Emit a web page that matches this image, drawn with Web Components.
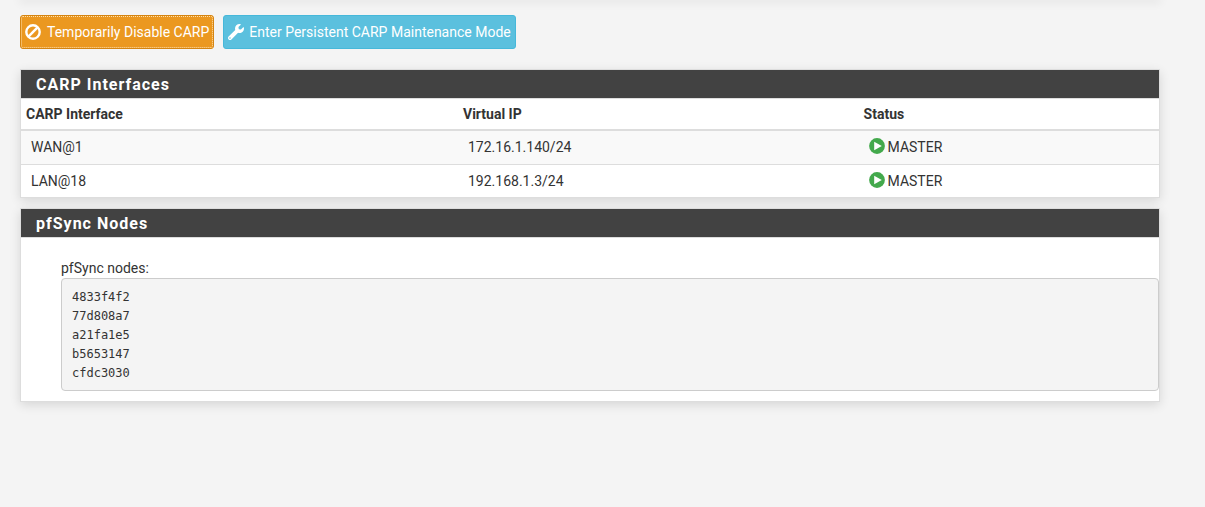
<!DOCTYPE html>
<html lang="en">
<head>
<meta charset="utf-8">
<title>Status: CARP</title>
<style>
body{margin:0;background:#f4f4f4;color:#333;font:14px/20px Roboto,"Liberation Sans",sans-serif}
</style>
</head>
<body>
<carp-page>
  <action-button slot="actions" kind="warning" icon="ban">Temporarily Disable CARP</action-button>
  <action-button slot="actions" kind="info" icon="wrench">Enter Persistent CARP Maintenance Mode</action-button>
  <status-panel><span slot="title">CARP Interfaces</span><carp-table></carp-table></status-panel>
  <status-panel><span slot="title">pfSync Nodes</span><node-list>4833f4f2
77d808a7
a21fa1e5
b5653147
cfdc3030</node-list></status-panel>
</carp-page>
<script>
const define = (name, html, setup) => customElements.define(name, class extends HTMLElement {
  constructor() {
    super();
    this.attachShadow({mode: 'open'}).innerHTML = html;
  }
  connectedCallback() { if (setup) setup(this, this.shadowRoot); }
});

const icons = {
  ban: '<svg viewBox="0 0 16 16" width="16" height="16" fill="none" stroke="#fff" stroke-width="2.4" aria-hidden="true"><circle cx="8" cy="8" r="6.7"/><path d="M3.4 12.6 12.6 3.4"/></svg>',
  wrench: '<svg viewBox="0 0 512 512" width="16" height="16" fill="#fff" aria-hidden="true"><path d="M507.73 109.1c-2.24-9.03-13.54-12.09-20.12-5.51l-74.36 74.36-67.88-11.31-11.31-67.88 74.36-74.36c6.62-6.62 3.43-17.9-5.66-20.16-47.38-11.74-99.55.91-136.58 37.93-39.64 39.64-50.55 97.1-34.05 147.2L18.74 402.76c-24.99 24.99-24.99 65.51 0 90.5 24.99 24.99 65.51 24.99 90.5 0l213.21-213.21c50.12 16.71 107.47 5.68 147.37-34.22 37.07-37.07 49.7-89.32 37.91-136.73zM64 472c-13.25 0-24-10.75-24-24 0-13.26 10.75-24 24-24s24 10.74 24 24c0 13.25-10.75 24-24 24z"/></svg>'
};

define('action-button', `<style>
:host{display:block}
button{display:flex;align-items:center;gap:6px;height:34px;padding:0 4px;border:1px solid;border-radius:3px;color:#fff;font:inherit;white-space:nowrap}
.icon{display:flex}
svg{flex:none}
.warning{background:#eb9820;border-color:#d58512;outline:1px dotted #ffdfae;outline-offset:-2px}
.info{background:#5bc0de;border-color:#46b8da;gap:5px}
</style><button type="button"><span class="icon"></span><slot></slot></button>`,
(host, root) => {
  root.querySelector('button').classList.add(host.getAttribute('kind'));
  root.querySelector('.icon').innerHTML = icons[host.getAttribute('icon')];
});

define('carp-page', `<style>
:host{display:block;padding:0 45px 20px 20px}
.edge{height:0;box-shadow:0 0 10px 1px rgba(0,0,0,.2)}
.actions{display:flex;flex-wrap:wrap;gap:9px;padding:15px 0 20px}
.panels{display:grid;grid-template-columns:minmax(0,1fr);gap:10px}
</style><div class="edge"></div><div class="actions"><slot name="actions"></slot></div><main class="panels"><slot></slot></main>`);

define('status-panel', `<style>
:host{display:block;background:#fff;border:1px solid #ddd;box-shadow:0 3px 10px rgba(0,0,0,.12)}
h2{margin:0;padding:5px 15px 3px;background:#424242;border-bottom:1px solid #ddd;color:#fff;font-size:16px;font-weight:700;line-height:20px;letter-spacing:1px}
</style><h2><slot name="title"></slot></h2><slot></slot>`);

define('play-status', `<style>
:host{display:flex;align-items:center;gap:3px}
svg{flex:none;margin-bottom:2px}
</style><svg viewBox="0 0 16 16" width="16" height="16" aria-hidden="true"><circle cx="8" cy="8" r="7.9" fill="#43a94c"/><path d="M5.2 3.8v8.4L12.8 8Z" fill="#fff"/></svg><slot></slot>`);

define('carp-table', `<style>
:host{display:block}
table{width:100%;border-collapse:separate;border-spacing:0;table-layout:fixed}
th,td{box-sizing:border-box}
th{padding:5px;text-align:left;font-weight:700;border-bottom:2px solid #ddd}
th:nth-child(1){width:38.4%}
th:nth-child(2){width:35.2%}
td{padding:6px 10px 7px;border-bottom:1px solid #ddd}
tbody tr:nth-child(odd) td{background:#f9f9f9}
tbody tr:last-child td{padding-bottom:6px;border-bottom:0}
</style><table>
<thead><tr><th scope="col">CARP Interface</th><th scope="col">Virtual IP</th><th scope="col">Status</th></tr></thead>
<tbody>
<tr><td>WAN@1</td><td>172.16.1.140/24</td><td><play-status>MASTER</play-status></td></tr>
<tr><td>LAN@18</td><td>192.168.1.3/24</td><td><play-status>MASTER</play-status></td></tr>
</tbody></table>`);

define('node-list', `<style>
:host{display:block;padding:20px 0 10px 40px}
pre{margin:0;padding:9px 10px 7px;background:#f4f4f4;border:1px solid #ccc;border-radius:4px;font:12px/19px "DejaVu Sans Mono","Liberation Mono",monospace}
</style><div>pfSync nodes:</div><pre><slot></slot></pre>`);
</script>
</body>
</html>
